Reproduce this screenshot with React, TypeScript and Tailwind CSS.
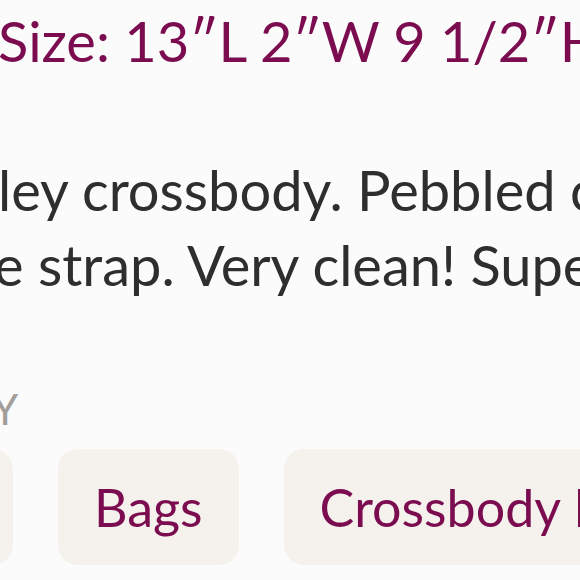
import React from 'react';

const App: React.FC = () => {
  return (
    <div
      className="w-[580px] h-[580px] overflow-hidden bg-[#fcfbfc] flex flex-col"
      style={{ fontFamily: 'Lato, "Noto Sans", sans-serif' }}
    >
      {/* size line */}
      <p className="pt-[9px] -ml-[2px] whitespace-nowrap text-[56px] leading-[64px] text-[#7a0c4f]">
        Size: 13″L 2″W 9 1/2″H
      </p>

      {/* description */}
      <div className="mt-[79px] whitespace-nowrap text-[56px] leading-[75px] text-[#2e2e2e]">
        <p className="-ml-[2px]">ley crossbody. Pebbled c</p>
        <p className="-ml-[6px]">e strap. Very clean! Supe</p>
      </div>

      {/* category */}
      <p className="mt-[83px] -ml-[8px] text-[42px] leading-[48px] text-[#a29d98] tracking-wide">
        Y
      </p>

      <div className="mt-[16px] flex gap-[45px] -ml-[127px]">
        <span className="shrink-0 w-[140px] h-[116px] rounded-[20px] bg-[#f5f2ee]" />
        <span className="shrink-0 h-[116px] px-[36px] rounded-[20px] bg-[#f5f2ee] flex items-center text-[52px] text-[#7a0c4f] whitespace-nowrap">
          Bags
        </span>
        <span className="shrink-0 h-[116px] px-[36px] rounded-[20px] bg-[#f5f2ee] flex items-center text-[52px] text-[#7a0c4f] whitespace-nowrap">
          Crossbody Bags
        </span>
      </div>
    </div>
  );
};

export default App;
